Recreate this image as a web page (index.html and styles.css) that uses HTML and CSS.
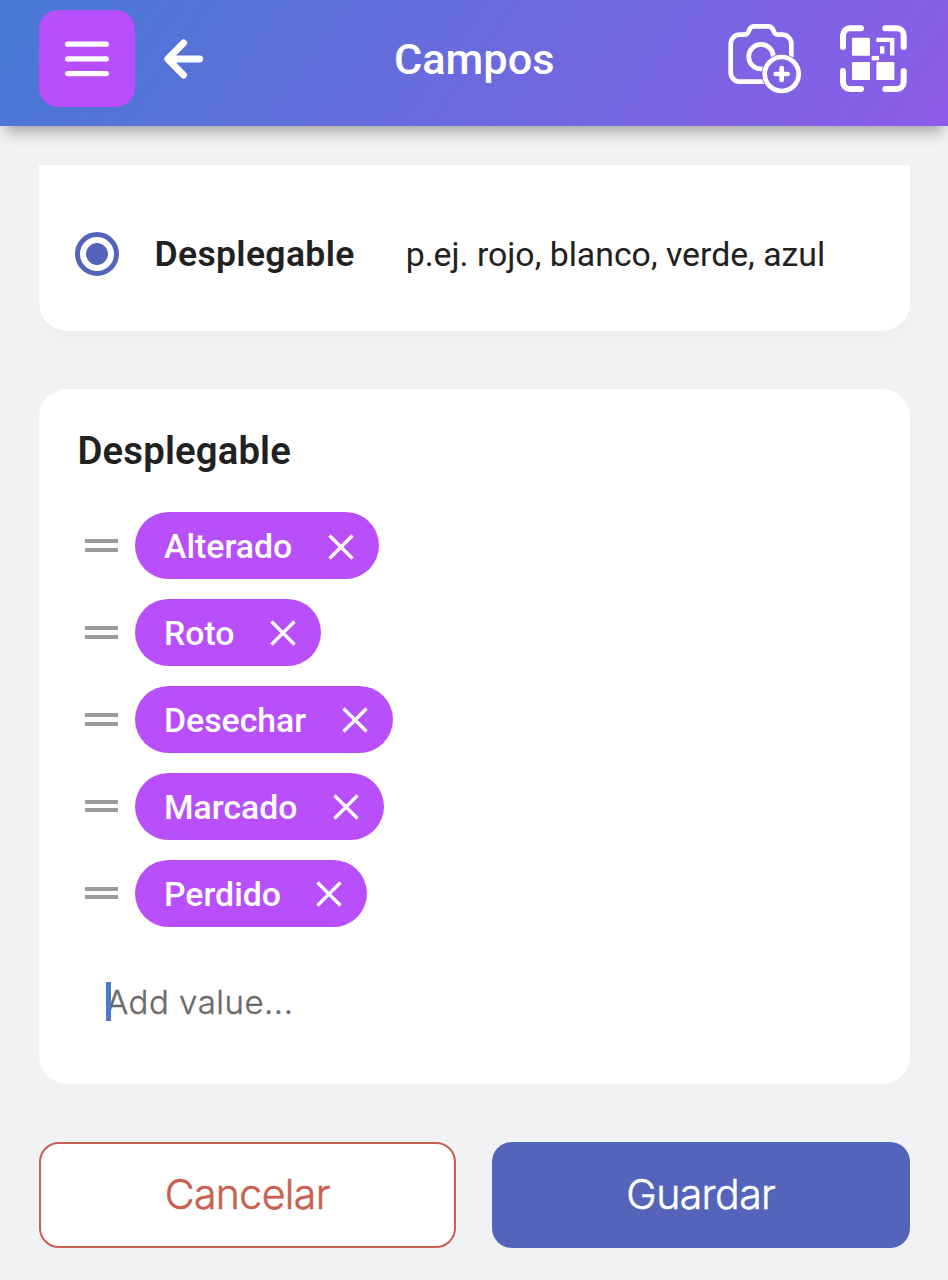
FILE: index.html
```html
<!DOCTYPE html>
<html lang="es">
<head>
    <meta charset="UTF-8">
    <meta name="viewport" content="width=device-width, initial-scale=1.0">
    <title>Campos</title>
    <link rel="stylesheet" href="styles.css">
</head>
<body>
    <header class="topbar">
        <div class="topbar-side">
            <button class="menu-button" aria-label="Menú">
                <svg width="44" height="36" viewBox="0 0 44 36"><path d="M2.7 3.2H41.3M2.7 17.9H41.3M2.7 32.6H41.3"/></svg>
            </button>
            <button class="back-button" aria-label="Volver">
                <svg width="40" height="40" viewBox="0 0 40 40"><path d="M19.6 3.9L3.8 20L19.6 36.1M5 20H35.7"/></svg>
            </button>
        </div>
        <h1>Campos</h1>
        <div class="topbar-side topbar-actions">
            <svg class="icon-camera" width="80" height="78" viewBox="0 0 80 78">
                <mask id="badge-cut">
                    <rect width="80" height="78" fill="#fff"/>
                    <circle cx="57.7" cy="54" r="20.1" fill="#000"/>
                </mask>
                <g mask="url(#badge-cut)">
                    <path d="M45 61.6H15.7a9 9 0 0 1-9-9V23.7a9 9 0 0 1 9-9H20q3 0 4.2-2.5l1.6-3.3Q27.2 6.3 30 6.3H44.4Q47.2 6.3 48.6 8.9l1.6 3.3Q51.4 14.7 54.4 14.7H58.3a9 9 0 0 1 9 9V40"/>
                    <circle cx="37" cy="36.7" r="12.3"/>
                </g>
                <circle cx="57.7" cy="54" r="17"/>
                <path d="M57.7 48V60M51.7 54H63.7"/>
            </svg>
            <svg class="icon-qr" width="74" height="74" viewBox="0 0 74 74">
                <path class="frame" d="M7 25V13.3a7 7 0 0 1 7-7H25M49.3 6.3H60.7a7 7 0 0 1 7 7V25M67.7 49V60a7 7 0 0 1-7 7H49.3M25 67H14a7 7 0 0 1-7-7V49"/>
                <rect x="16" y="15.7" width="18" height="18" rx="1"/>
                <rect x="16" y="40" width="18" height="18" rx="1"/>
                <rect x="40.4" y="40" width="18" height="18" rx="1"/>
                <path d="M40.4 15.7H57.4q1 0 1 1V33.4H54V20.1H40.4Z"/>
                <rect x="44" y="24.3" width="4.4" height="7.4"/>
                <rect x="35.7" y="33.9" width="7.4" height="4.5"/>
            </svg>
        </div>
    </header>

    <main class="content">
        <div class="type-wrap">
            <label class="card type-card">
                <span class="radio"></span>
                <span class="type-name">Desplegable</span>
                <span class="type-example">p.ej. rojo, blanco, verde, azul</span>
            </label>
        </div>

        <section class="card values-card">
            <h2>Desplegable</h2>
            <ul class="values">
                <li>
                    <span class="handle"></span>
                    <span class="chip">Alterado <svg class="remove" viewBox="0 0 26 26"><path d="M1.5 1.5L24.5 24.5M24.5 1.5L1.5 24.5"/></svg></span>
                </li>
                <li>
                    <span class="handle"></span>
                    <span class="chip">Roto <svg class="remove" viewBox="0 0 26 26"><path d="M1.5 1.5L24.5 24.5M24.5 1.5L1.5 24.5"/></svg></span>
                </li>
                <li>
                    <span class="handle"></span>
                    <span class="chip">Desechar <svg class="remove" viewBox="0 0 26 26"><path d="M1.5 1.5L24.5 24.5M24.5 1.5L1.5 24.5"/></svg></span>
                </li>
                <li>
                    <span class="handle"></span>
                    <span class="chip">Marcado <svg class="remove" viewBox="0 0 26 26"><path d="M1.5 1.5L24.5 24.5M24.5 1.5L1.5 24.5"/></svg></span>
                </li>
                <li>
                    <span class="handle"></span>
                    <span class="chip">Perdido <svg class="remove" viewBox="0 0 26 26"><path d="M1.5 1.5L24.5 24.5M24.5 1.5L1.5 24.5"/></svg></span>
                </li>
            </ul>
            <div class="add-value">
                <span class="caret"></span>
                <input type="text" placeholder="Add value...">
            </div>
        </section>

        <div class="buttons">
            <button class="btn btn-cancel">Cancelar</button>
            <button class="btn btn-save">Guardar</button>
        </div>
    </main>
</body>
</html>
```
FILE: styles.css
```css
* {
    box-sizing: border-box;
}
body {
    margin: 0;
    height: 1280px;
    overflow: hidden;
    background-color: #f0f2f4;
    color: #212121;
    font-family: Roboto, sans-serif;
}
button {
    border: none;
    padding: 0;
    background: none;
}
svg {
    display: block;
    flex-shrink: 0;
}

/* Header */
.topbar {
    position: relative;
    display: flex;
    align-items: flex-start;
    justify-content: space-between;
    height: 126px;
    padding: 10px 38px 0 38.5px;
    background: linear-gradient(125deg, #4679d2 0%, #6c6adf 52%, #8d5ce8 100%);
    box-shadow: 0 11px 14px -5px rgba(0, 0, 0, 0.32);
}
.topbar h1 {
    margin: 0;
    font-size: 43.3px;
    font-weight: 500;
    line-height: 99px;
    color: #fff;
}
.topbar-side {
    display: flex;
    align-items: center;
    width: 190px;
    height: 97px;
}
.topbar-actions {
    justify-content: flex-end;
    gap: 32px;
}
.menu-button {
    display: flex;
    align-items: center;
    justify-content: center;
    width: 96.5px;
    height: 97px;
    border-radius: 19px;
    background-color: #b84ffb;
}
.menu-button path {
    fill: none;
    stroke: #fff;
    stroke-width: 5.3;
    stroke-linecap: round;
}
.back-button {
    margin-left: 28.5px;
}
.back-button path {
    fill: none;
    stroke: #fff;
    stroke-width: 6.8;
    stroke-linecap: round;
    stroke-linejoin: round;
}
.icon-camera path,
.icon-camera > circle,
.icon-camera g circle {
    fill: none;
    stroke: #fff;
    stroke-width: 4.7;
    stroke-linecap: round;
}
.icon-qr {
    fill: #fff;
}
.icon-qr .frame {
    fill: none;
    stroke: #fff;
    stroke-width: 6;
    stroke-linecap: round;
}

/* Cards */
.content {
    padding: 39px 38.5px 0;
}
.card {
    background-color: #fff;
    border-radius: 28px;
}
.type-wrap {
    height: 223.5px;
    overflow: hidden;
}
.type-card {
    display: flex;
    align-items: center;
    height: 166px;
    padding: 12px 36px 0;
    border-radius: 0 0 28px 28px;
    box-shadow: 0 8px 34px rgba(0, 0, 0, 0.025);
}
.radio {
    width: 44px;
    height: 44px;
    border: 5px solid #5464bb;
    border-radius: 50%;
    background: radial-gradient(circle, #5464bb 10.5px, #fff 11.3px);
}
.type-name {
    margin-left: 36px;
    font-size: 35.5px;
    font-weight: 600;
    letter-spacing: 0.35px;
}
.type-example {
    margin-left: 51px;
    font-size: 33.8px;
}
.values-card {
    height: 695.5px;
    padding: 38px 39px 0;
}
.values-card h2 {
    margin: 0;
    font-size: 38.3px;
    font-weight: 600;
    line-height: 47px;
    letter-spacing: 0.15px;
}
.values {
    margin: 38.5px 0 0;
    padding: 0;
    list-style: none;
}
.values li {
    display: flex;
    align-items: center;
    height: 67px;
    margin-bottom: 19.9px;
}
.handle {
    width: 32.5px;
    height: 12.5px;
    margin: 0 17.5px 0 7.5px;
    border-top: 4px solid #9b9b9b;
    border-bottom: 4px solid #9b9b9b;
}
.chip {
    display: flex;
    align-items: center;
    gap: 35.5px;
    height: 67px;
    padding: 2px 25px 0 29px;
    border-radius: 34px;
    background-color: #b84ffb;
    color: #fff;
    font-size: 33.8px;
    font-weight: 500;
}
.remove {
    width: 26px;
    height: 26px;
    fill: none;
    stroke: #fff;
    stroke-width: 3.2;
}
.add-value {
    position: relative;
    display: flex;
    height: 39px;
    margin: 55.5px 0 0 28.5px;
}
.add-value input {
    flex: 1;
    padding: 0;
    border: none;
    outline: none;
    font-family: Inter, sans-serif;
    font-size: 33px;
    font-weight: 300;
    letter-spacing: 0.5px;
    -webkit-text-stroke: 0.4px #6a6a6a;
}
.add-value input::placeholder {
    color: #6a6a6a;
}
.caret {
    position: absolute;
    left: 0;
    top: 0;
    width: 5px;
    height: 39px;
    background-color: #4a7bc4;
}

/* Actions */
.buttons {
    display: grid;
    grid-template-columns: 1fr 1fr;
    gap: 36px;
    margin-top: 58px;
}
.btn {
    height: 106px;
    padding-bottom: 2px;
    border-radius: 20px;
    font-family: Inter, sans-serif;
    font-size: 41px;
    font-weight: 300;
    letter-spacing: -0.6px;
    -webkit-text-stroke: 0.5px currentColor;
}
.btn-cancel {
    border: 2.5px solid #c95f50;
    background-color: #fff;
    color: #c95f50;
}
.btn-save {
    background-color: #5464bb;
    color: #fff;
}
```
